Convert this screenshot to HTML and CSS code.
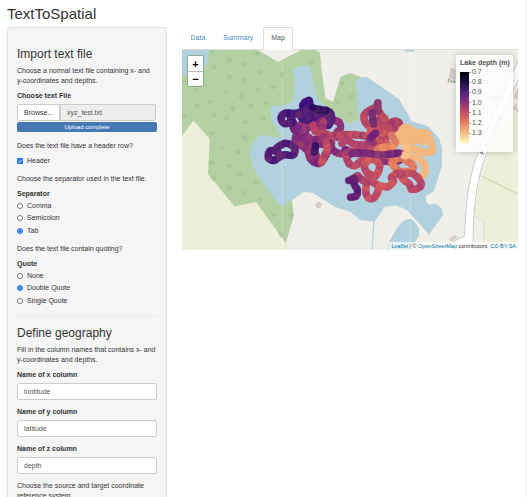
FILE: index.html
```html
<!DOCTYPE html>
<html lang="en">
<head>
<meta charset="utf-8">
<title>TextToSpatial</title>
<link rel="stylesheet" href="styles.css">
</head>
<body>
<div class="page">
<h1 class="title">TextToSpatial</h1>
<div class="row">
<form class="sidebar">
  <h2>Import text file</h2>
  <p>Choose a normal text file containing x- and<br>y-coordinates and depths.</p>
  <div class="label">Choose text File</div>
  <div class="file"><span class="browse">Browse...</span><span class="filename">xyz_test.txt</span></div>
  <div class="progress">Upload complete</div>
  <p class="after-file">Does the text file have a header row?</p>
  <label class="option header-option"><svg class="mark" viewBox="0 0 6 6"><rect width="6" height="6" rx="1" fill="#1976ed"/><path d="M1.3 3.1 2.6 4.3 4.8 1.7" fill="none" stroke="#fff" stroke-width=".9"/></svg>Header</label>
  <p>Choose the separator used in the text file.</p>
  <div class="label group-label">Separator</div>
  <div class="options">
    <label class="option"><i class="radio"></i>Comma</label>
    <label class="option"><i class="radio"></i>Semicolon</label>
    <label class="option"><i class="radio on"></i>Tab</label>
  </div>
  <p>Does the text file contain quoting?</p>
  <div class="label group-label">Quote</div>
  <div class="options">
    <label class="option"><i class="radio"></i>None</label>
    <label class="option"><i class="radio on"></i>Double Quote</label>
    <label class="option"><i class="radio"></i>Single Quote</label>
  </div>
  <hr>
  <h2 class="second">Define geography</h2>
  <p>Fill in the column names that contains x- and<br>y-coordinates and depths.</p>
  <div class="field"><div class="label">Name of x column</div><div class="input">lontitude</div></div>
  <div class="field"><div class="label">Name of y column</div><div class="input">latitude</div></div>
  <div class="field"><div class="label">Name of z column</div><div class="input">depth</div></div>
  <p>Choose the source and target coordinate<br>reference system.</p>
</form>
<main class="main">
  <nav class="tabs"><a>Data</a><a>Summary</a><a class="active">Map</a></nav>
  <div class="map">
    <svg class="canvas" viewBox="182 50 336 200">
      <defs>
        <marker id="tree" viewBox="-9 -9 18 18" markerWidth="18" markerHeight="18" markerUnits="userSpaceOnUse">
          <path d="M-5 1C-9-1-7-7-3-6S0 0-3 1M-3-2V4L0 7M3 1C0-1 0-7 4-6S8 0 4 1M4-2Q5 3 0 7" fill="none" stroke="#93b987" stroke-width="1.4"/>
        </marker>
      </defs>
      <rect x="182" y="50" width="336" height="200" fill="#f1efea"/>
      <path fill="#b4d1a3" d="M182 50H258L278 62 301 50 316 50 320 53 321.500 70 325.500 98 333 102 340.500 77 350 73 361 77 358 120 350 124 294 216 286 243 289 250H182Z"/>
      <path fill="#b1d1df" d="M182 50H209.500L207.700 63 203 72 203 75H182ZM403 50H415L413 52 408 52Z"/>
      <path fill="#eeefd8" d="M182 136 193.500 120.500 209.700 139 208 174 234.500 206.500 256 202 285.700 243 289 250H182Z"/>
      <path fill="#b1d1df" d="M292 71.500 297 67 303 65.500 309.500 66 312.500 76.500 313 83 318 100 343 120 350 124 358 120 357 90 355.500 82 360 77.500 367 77 399 99 412 121.500 428 126 439 138 442 148V166L434 191 426 196V202L429.500 205 435 203.500 441.500 208 443 215 429 234.500 407 210 396.500 205.500 385 206.500 374.500 222 360 220 350 212 335 207 312.700 193 303.700 192 292 200 281 206.500 271.500 195 253 168 250 151.500 253 142 257 137 262 135 281 138 282 137 275 126 271.500 121 270 111 272 106 282 106 293 101.500 295.500 80Z"/>
      <path fill="#f1efea" d="M292 200 303.700 192 312.700 193 335 207 350 212 360 220 374 222V250H289L286 243 294 216Z"/>
      <path fill="#b1d1df" d="M408 219 403 221 397 228 389 242 388 250H409L415 242 419 235V229L415 222 411 219Z"/>
      <path d="M374 222 372 250" fill="none" stroke="#b1d1df" stroke-width="1.200"/>
      <path fill="#eeefd8" d="M518 111 513 114 489 150 475 205 474 216 484 221V250H518Z"/>
      <path d="M480 175.500 518 194" fill="none" stroke="#b9d6a5"/>
      <path d="M474 216 484 221V250" fill="none" stroke="#c9c6c0" stroke-width=".5"/>
      <path d="M451 68 458 71 455 80 449 78ZM518 88 514 97 518 100ZM516 103 513 109 518 112ZM490 96h8v4h-8ZM449 239l6-4 2 3-6 3ZM316 204l3-2 3 2-2 4-4-1Z" fill="#d9d0ca" stroke="#c2b7ae" stroke-width=".4"/>
      <g fill="none">
        <path d="M469 252C468 207 474 178 479 162C485 146 496 120 502 105L522 62M445 253Q454 245 468 239" stroke="#c0c0c0" stroke-width="9"/>
        <path d="M469 252C468 207 474 178 479 162C485 146 496 120 502 105L522 62M445 253Q454 245 468 239" stroke="#fff" stroke-width="7.500"/>
      </g>
      <text class="road-name" transform="translate(486 150) rotate(-65)">ræstemosevej</text>
      <text class="road-name dark" transform="translate(483 155) rotate(-60)">P</text>
      <text class="place" x="447.500" y="83">Pra</text>
      <text class="place" x="483" y="83">rd</text>
      <path d="M282 50V250M410 50V250" stroke="#fff" stroke-opacity=".35" stroke-width=".7"/>
      <g transform="translate(175 20) scale(.33333)">
        <path fill="none" marker-start="url(#tree)" marker-mid="url(#tree)" marker-end="url(#tree)" d="M112 97 162 120 207 135 247 103 118 142 257 157 319 165 62 212 28 187 163 172 207 180 152 215 197 230 247 208 294 203 408 130 65 258 104 247 25 290 117 286 174 267 228 257 270 253 155 297 210 308 265 298 112 342 205 352 487 245 530 230 503 190 525 285 215 359 143 385 189 397 108 430 162 440 195 467 115 476 162 505 207 520 245 488 257 540 294 587 348 588 318 645"/>
      </g>
      <g class="track" transform="translate(255 85) scale(.33333)">
        <path stroke="#873078" d="M117 135 145 115 177 118 205 100 205 125 163 126 145 145 123 151 125 176 151 180 148 151 177 165 212 149"/>
        <path stroke="#8d3278" d="M115 128 140 132 152 143 138 155 152 170 140 180"/>
        <path stroke="#873078" d="M212 119 235 106 253 113 256 130 245 143"/>
        <path stroke="#4b1a78" d="M120 85 92 84 79 96 82 110 92 116 115 112 105 95 130 83 152 75 140 98 160 105 183 88 158 72 142 62 162 45 168 70 198 73 224 82 230 105 220 122"/>
        <path stroke="#552079" d="M132 90 150 102 174 88 M174 88 200 84"/>
        <path stroke="#4f1d79" d="M200 80 216 88 225 104 221 118"/>
        <path stroke="#35155f" d="M173 68 198 77 214 77"/>
        <path stroke="#b84566" d="M174 120 182 140 207 145 229 152 260 151 290 149"/>
        <path stroke="#a63f6c" d="M230 185 226 165 205 158 202 135 205 112"/>
        <path stroke="#892f75" d="M139 180 158 198 168 225 197 234 216 204 228 178 200 178 171 174 180 200 186 220"/>
        <path stroke="#892f75" d="M225 187 245 203 287 208"/>
        <path stroke="#511c77" d="M74 215 68 200 50 196 40 209 44 223 60 226 74 213 94 209 112 212 121 197 110 181 88 175 68 187 58 198"/>
        <path stroke="#3e1769" d="M182 182 178 202"/>
        <path stroke="#c24d64" d="M212 170 217 192 208 212 200 232"/>
      </g>
      <g class="track" transform="translate(345 90) scale(.33333)">
        <path stroke="#7d2d78" d="M0 178 30 190 60 187 110 190 165 189"/>
        <path stroke="#b34765" d="M87 54 64 67 57 82 63 101 79 111 92 98 107 81 100 65 110 76 121 92 108 109 84 115 97 137 129 118 142 95 161 96 164 112 150 113 135 130 120 145 92 150 76 142 35 134 0 135 -22 142"/>
        <path stroke="#b9496a" d="M-10 160 10 150 24 162 60 164 90 162 116 160 110 176 72 173 40 170 22 184 5 190 9 216 28 228 48 212 80 204"/>
        <path stroke="#c5515f" d="M76 125 97 118 112 132 104 149 125 160"/>
        <path stroke="#782a78" d="M98 38 99 62"/>
        <path stroke="#6c2677" d="M81 68 86 103"/>
        <path stroke="#873078" d="M92 128 73 149 84 158"/>
        <path stroke="#7d2d78" d="M115 214 151 215 175 207"/>
        <path stroke="#f3b77e" d="M168 126 181 112 215 127 248 132 257 157 263 182 242 187 207 177 180 162 171 140 198 138 234 157"/>
        <path stroke="#f3b77e" d="M189 203 215 204 234 218 241 239 233 258"/>
        <path stroke="#f3b77e" d="M157 137 172 155 215 150 240 145 225 135 185 128"/>
        <path stroke="#e98762" d="M139 136 151 155 141 170 109 172 97 190 149 199 181 195 184 174"/>
        <path stroke="#e67e60" d="M140 220 161 242 193 244 205 228 174 206 148 205"/>
        <path stroke="#c34f64" d="M72 208 59 226 65 247 87 259 101 245 102 222 84 208 72 210"/>
        <path stroke="#c34f64" d="M76 252 65 271 63 306 69 323 85 325 96 309 100 289 84 278"/>
        <path stroke="#bd4c65" d="M104 287 129 290 145 273 139 261 165 248 174 268 192 282 199 297 219 295 229 282 213 257 188 250 170 262"/>
        <path stroke="#ae4269" d="M66 278 49 268 37 257 25 270"/>
        <path stroke="#672173" d="M12 271 29 267 29 286 37 300 33 318 16 322"/>
        <path stroke="#f6c087" d="M180 170 191 178 188 194 176 196"/>
        <path stroke="#7d2d78" d="M20 189 60 189 110 195 160 189"/>
      </g>
    </svg>
    <div class="zoom-control"><span>+</span><span>−</span></div>
    <div class="legend"><b>Lake depth (m)</b><div class="scale"><i class="gradient"></i><div class="ticks"><span>0.7</span><span>0.8</span><span>0.9</span><span>1.0</span><span>1.1</span><span>1.2</span><span>1.3</span></div></div></div>
    <div class="attribution"><a>Leaflet</a> | © <a>OpenStreetMap</a> contributors, <a>CC-BY-SA</a></div>
  </div>
</main>
</div>
</div>
<script src="track.js"></script>
</body>
</html>
```
FILE: styles.css
```css
* { box-sizing: border-box; }
body { margin: 0; overflow: hidden; background: #fff; color: #333; font: 7px/10px "Liberation Sans", Arial, sans-serif; }
.page { height: 497px; overflow: hidden; border-right: 1px solid #eee; padding: 5px 0 0 7px; }
.title { margin: 0; height: 22px; font-size: 15px; line-height: 18px; font-weight: 400; }
.row { display: flex; gap: 15px; align-items: flex-start; }
.sidebar { width: 160px; height: 500px; padding: 18px 9px 0; background: #f5f5f5; border: 1px solid #e3e3e3; border-radius: 2px; }
h2 { margin: 0 0 4px; font-size: 12px; line-height: 16px; font-weight: 400; }
p { margin: 0 0 5px; white-space: nowrap; }
.label { font-weight: 700; margin-bottom: 2.5px; }
.file { display: flex; height: 17px; }
.browse, .filename { border: 1px solid #ccc; line-height: 15px; }
.browse { width: 43px; padding-left: 6px; background: #fff; border-radius: 2px 0 0 2px; }
.filename { width: 96px; padding-left: 6px; background: #eee; color: #555; border-radius: 0 2px 2px 0; }
.progress { height: 10px; margin-top: 1px; border-radius: 2px; background: #4678b6; color: #fff; font-size: 6px; text-align: center; }
.after-file { margin: 9px 0 5px; }
.option { display: flex; align-items: center; gap: 4px; height: 10px; }
.mark { width: 6px; height: 6px; }
.header-option { margin-bottom: 8px; }
.group-label { margin-bottom: 2px; }
.options { display: flex; flex-direction: column; gap: 2.5px; margin-bottom: 8px; }
.radio { width: 6px; height: 6px; border: 1px solid #777; border-radius: 50%; background: #fff; }
.radio.on { border-color: #2676ec; background: #2676ec; box-shadow: inset 0 0 0 .5px #a6c8fa; }
hr { width: 100%; margin: 10px 0 8px; border: 0; border-top: 1px solid #eaeaea; }
h2.second { margin-bottom: 4px; }
.field { height: 37px; }
.field .label { margin-bottom: 3px; }
.input { height: 17px; padding-left: 6px; border: 1px solid #ccc; border-radius: 2px; background: #fff; color: #555; line-height: 15px; }
.main { width: 336px; }
.tabs { display: flex; height: 23px; border-bottom: 1px solid #ddd; }
.tabs a { height: 23px; padding: 5px 7.5px 0; margin-right: 1px; color: #428bca; border: 1px solid transparent; border-bottom: 0; line-height: 10px; }
.tabs .active { color: #555; background: #fff; border-color: #ddd; border-radius: 2px 2px 0 0; }
.map { position: relative; height: 200px; overflow: hidden; }
.canvas { display: block; width: 336px; height: 200px; }
.track path { fill: none; stroke-width: 21; stroke-linecap: round; stroke-linejoin: round; }
.road-name { font: 6px "Liberation Sans", sans-serif; fill: #aaa; }
.road-name.dark { fill: #222; }
.place { font: 5px "DejaVu Sans", sans-serif; fill: #666; }
.zoom-control { position: absolute; left: 5px; top: 5px; width: 17px; height: 32px; border: 1px solid #92a98c; border-radius: 2px; background: #fff; display: grid; grid-template-rows: 15px 15px; color: #000; font: bold 11px/16px "Liberation Sans", sans-serif; text-align: center; }
.zoom-control span + span { border-top: 1px solid #bbb; line-height: 14px; }
.legend { position: absolute; left: 274px; top: 5px; width: 57px; height: 97px; padding: 3px 4px; border-radius: 2px; background: rgba(255,255,255,.8); box-shadow: 0 0 7px rgba(0,0,0,.2); color: #555; }
.legend b { display: block; height: 10px; margin-bottom: 4px; font-size: 7px; white-space: nowrap; }
.scale { display: flex; align-items: flex-start; }
.gradient { width: 9px; height: 71px; background: linear-gradient(#000004, #1b0f45 14%, #52207c 28%, #87307a 42%, #bf4b67 55%, #e57a5e 70%, #f4ba82 85%, #fcf8b9); }
.ticks { margin-top: -5px; }
.ticks span { display: flex; align-items: center; height: 10.2px; color: #555; }
.ticks span::before { content: ""; width: 2px; height: 1px; margin-right: 1px; background: #aaa; }
.attribution { position: absolute; right: 0; bottom: 0; height: 8px; padding: 0 2px; background: rgba(255,255,255,.7); color: #333; font-size: 5.5px; line-height: 8px; white-space: nowrap; }
.attribution a { color: #0078a8; }
```
FILE: track.js
```js
// Smooths each survey track and scatters depth soundings along it.
const NS = "http://www.w3.org/2000/svg";
let seed = 7;
const random = () => (seed = (seed * 16807) % 2147483647) / 2147483647;

document.querySelectorAll(".track path").forEach((path) => {
  const n = path.getAttribute("d").match(/-?[\d.]+/g).map(Number);
  const p = [];
  for (let i = 0; i < n.length; i += 2) p.push([n[i], n[i + 1]]);
  let d = `M${p[0]}`;
  for (let i = 0; i < p.length - 1; i++) {
    const a = p[i - 1] || p[i], b = p[i], c = p[i + 1], e = p[i + 2] || c;
    d += `C${b[0] + (c[0] - a[0]) / 6} ${b[1] + (c[1] - a[1]) / 6} ${c[0] - (e[0] - b[0]) / 6} ${c[1] - (e[1] - b[1]) / 6} ${c}`;
  }
  path.setAttribute("d", d);

  const hex = path.getAttribute("stroke");
  const rgb = [1, 3, 5].map((i) => parseInt(hex.slice(i, i + 2), 16));
  const pale = rgb[1] > 150;
  const length = path.getTotalLength();
  for (let s = 0; s < length; s += 6) {
    const at = path.getPointAtLength(s);
    const k = (random() - 0.5) * (pale ? 0.15 : 1);
    const dot = document.createElementNS(NS, "circle");
    dot.setAttribute("cx", at.x + (random() - 0.5) * 4);
    dot.setAttribute("cy", at.y + (random() - 0.5) * 4);
    dot.setAttribute("r", 11);
    dot.setAttribute("fill", `rgb(${rgb[0] + k * 60},${rgb[1] + k * 40},${rgb[2] - k * 20})`);
    dot.setAttribute("fill-opacity", 0.6);
    path.parentNode.insertBefore(dot, path.nextSibling);
  }
});
```
